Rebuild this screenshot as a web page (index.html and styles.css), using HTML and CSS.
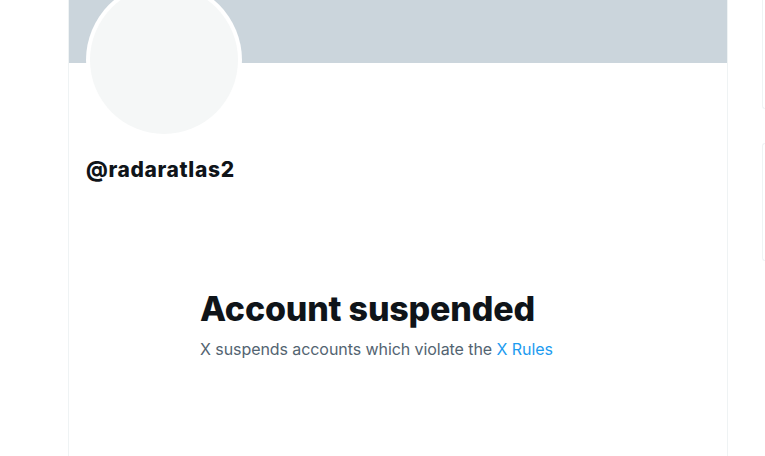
FILE: index.html
```html
<!DOCTYPE html>
<html>
<head>
<meta charset="utf-8">
<link rel="stylesheet" href="styles.css">
</head>
<body>
<div class="page">
  <main class="column">
    <div class="banner"></div>
    <div class="profile">
      <div class="avatar"><div class="avatar-inner"></div></div>
      <div class="handle">@radaratlas2</div>
    </div>
    <section class="empty">
      <h1 class="empty-title">Account suspended</h1>
      <p class="empty-text">X suspends accounts which violate the <a class="link" href="#">X Rules</a></p>
    </section>
  </main>
  <aside class="sidebar">
    <div class="card card-one"></div>
    <div class="card card-two"></div>
  </aside>
</div>
</body>
</html>
```
FILE: styles.css
```css
html, body {
  margin: 0;
  padding: 0;
  background: #ffffff;
  height: 100%;
  overflow: hidden;
}
body {
  font-family: "Inter", "Liberation Sans", Arial, sans-serif;
  color: #0f1419;
}
.page {
  display: flex;
  align-items: stretch;
  padding-left: 68px;
  gap: 34px;
  height: 456px;
}
.column {
  width: 658px;
  border-left: 1px solid #eff3f4;
  border-right: 1px solid #eff3f4;
  flex: none;
}
.banner {
  height: 63px;
  background: #cbd5dc;
}
.profile {
  padding-left: 17px;
}
.avatar {
  width: 156px;
  height: 156px;
  margin-top: -81px;
  border-radius: 50%;
  background: #ffffff;
  padding: 4px;
  box-sizing: border-box;
}
.avatar-inner {
  width: 100%;
  height: 100%;
  border-radius: 50%;
  background: #f5f7f7;
}
.handle {
  margin-top: 20px;
  font-size: 21px;
  line-height: 24px;
  font-weight: 800;
  letter-spacing: 0.65px;
}
.empty {
  padding-left: 131px;
  margin-top: 107px;
}
.empty-title {
  margin: 0;
  font-size: 34px;
  line-height: 40px;
  font-weight: 800;
  letter-spacing: -0.2px;
}
.empty-text {
  margin: 10px 0 0;
  font-size: 16px;
  line-height: 20px;
  letter-spacing: -0.07px;
  color: #536471;
}
.link {
  color: #1d9bf0;
  text-decoration: none;
}
.sidebar {
  flex: 1;
  display: flex;
  flex-direction: column;
  gap: 34px;
}
.card {
  border: 1px solid #eff3f4;
  border-right: none;
  border-radius: 16px 0 0 16px;
  background: #ffffff;
}
.card-one {
  height: 120px;
  margin-top: -12px;
  border-top: none;
  border-radius: 0 0 0 16px;
}
.card-two {
  height: 116px;
}
```
